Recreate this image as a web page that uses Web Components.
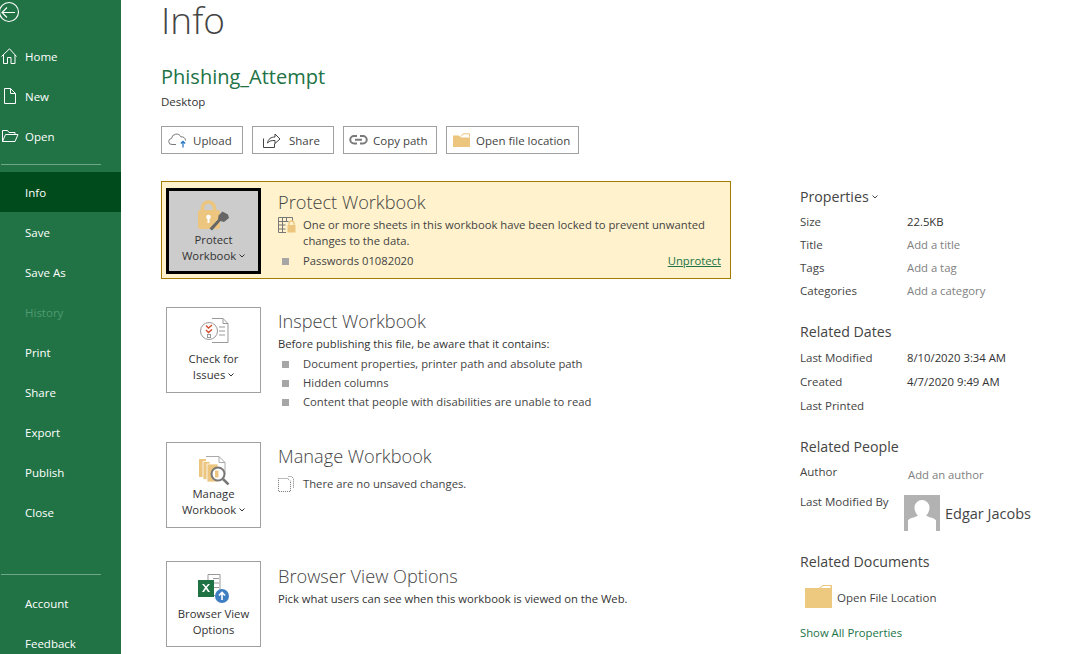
<!DOCTYPE html>
<html>
<head>
<meta charset="utf-8">
<title>Info</title>
<style>
    html, body { margin: 0; height: 654px; overflow: hidden; background: #fff; }
    body { font-family: "Open Sans", "Liberation Sans", sans-serif; font-size: 11.5px; color: #444; }
    svg { display: block; }
</style>
</head>
<body>
<info-page>
    <side-nav slot="nav">
        <svg slot="back" width="20" height="22" viewBox="0 0 20 22" fill="none" stroke="#fff" stroke-width="1.1"><circle cx="9" cy="11" r="9.5"/><path d="M2 11.500h13M7 6.500l-5 5 5 5"/></svg>
        <nav-item><svg slot="icon" width="16" height="16" viewBox="0 0 16 16" fill="none" stroke="#fff"><path d="M.5 8.500 8.500.8l7 7.700M2.500 7v8.500h4v-6h3.500v6h4V7"/></svg>Home</nav-item>
        <nav-item><svg slot="icon" width="16" height="18" viewBox="0 0 16 18" fill="none" stroke="#fff"><path d="M3.500 1.500h6l5 5v10h-11zM9.500 1.500v5h5"/></svg>New</nav-item>
        <nav-item><svg slot="icon" width="18" height="14" viewBox="0 0 18 14" fill="none" stroke="#fff"><path d="M1.500 12.500v-11h5l1.500 2h6v2M1.500 12.500l3-7h12.500l-3 7z"/></svg>Open</nav-item>
        <nav-rule style="margin: 8px 0 7px 1px"></nav-rule>
        <nav-item active>Info</nav-item>
        <nav-item>Save</nav-item>
        <nav-item>Save As</nav-item>
        <nav-item disabled>History</nav-item>
        <nav-item>Print</nav-item>
        <nav-item>Share</nav-item>
        <nav-item>Export</nav-item>
        <nav-item>Publish</nav-item>
        <nav-item>Close</nav-item>
        <nav-rule style="margin: 42px 0 8px 1px"></nav-rule>
        <nav-item>Account</nav-item>
        <nav-item>Feedback</nav-item>
    </side-nav>

    <file-head slot="head" name="Phishing_Attempt" where="Desktop">
        <cmd-button width="82" lead="31">
            <svg slot="icon" width="20" height="16" viewBox="0 0 20 16" fill="none" stroke="#7a7a7a"><path d="M8 12.500H4a3 3 0 0 1-.5-6 5 5 0 0 1 9.500-1.500 3.500 3.500 0 0 1 4.500 3.500"/><path d="M15 15.500V9.500M12.800 11.500l2.200-2.200 2.200 2.200" stroke="#2b79c2" stroke-width="1.300"/></svg>
            Upload
        </cmd-button>
        <cmd-button width="82" lead="36">
            <svg slot="icon" width="20" height="18" viewBox="0 0 20 18" fill="none" stroke="#444"><path d="M2.500 7.500v9h11v-4"/><path d="M6.500 12c.5-4 3.500-6 7.500-6V3l5 5-5 4.500V9.500c-3 0-5.500 0-7.500 2.500z" fill="#fff"/></svg>
            Share
        </cmd-button>
        <cmd-button width="94" lead="29">
            <svg slot="icon" width="19" height="12" viewBox="0 0 19 12" fill="none" stroke="#7a7a7a" stroke-width="2"><path d="M8 2H5a3.500 3.500 0 0 0 0 7.500h3M11 2h3a3.500 3.500 0 0 1 0 7.500h-3M6 5.800h7"/></svg>
            Copy path
        </cmd-button>
        <cmd-button width="133" lead="29">
            <svg slot="icon" width="18" height="14" viewBox="0 0 18 14"><path d="M0 2.500h6l2 2h9v9.500H0z" fill="#ecc57f"/><path d="M8 3.500 10 .8h6.500v3" fill="none" stroke="#ecc57f"/></svg>
            Open file location
        </cmd-button>
    </file-head>

    <info-section slot="sections" heading="Protect Workbook" alert style="margin-top: 27px">
        <big-tile slot="tile" pressed drop>
            <svg slot="icon" width="34" height="31" viewBox="0 0 34 31">
                <path d="M5.500 11V8a6 6 0 0 1 12 0v3" fill="none" stroke="#ecc57f" stroke-width="3.500"/>
                <rect x="1" y="10" width="22" height="19" rx="2" fill="#ecc57f"/>
                <circle cx="11.500" cy="17" r="2.300" fill="#fff"/><rect x="10.500" y="17" width="2" height="6" fill="#fff"/>
                <path d="M25.500 11.500 31 14.500l1 3.500-5 4-3.500-1-8.500 9.500-2.500-2 8.500-9 .5-4z" fill="#666"/>
            </svg>
            Protect<br>Workbook
        </big-tile>
        <line-row style="margin-top: 2px">
            <svg slot="icon" width="18" height="16" viewBox="0 0 18 16" fill="none" stroke="#777"><path d="M.5.500h14v4M.5.500v15h7.500M.5 4.500h10M.5 8h7M.5 12h7M4.500.500v15M8.500.500v4"/><path d="M11 8V6.500a2.500 2.500 0 0 1 5 0V8" stroke="#ecc57f" stroke-width="1.300"/><rect x="9.500" y="8" width="8" height="7.500" fill="#ecc57f" stroke="none"/></svg>
            One or more sheets in this workbook have been locked to prevent unwanted changes to the data.
        </line-row>
        <line-row bullet style="margin-top: 4px">
            <span>Passwords 01082020</span>
            <text-link slot="end" underline>Unprotect</text-link>
        </line-row>
    </info-section>

    <info-section slot="sections" heading="Inspect Workbook" style="margin-top: 21px">
        <big-tile slot="tile" drop>
            <svg slot="icon" width="30" height="25" viewBox="0 0 30 25" fill="none" style="margin-bottom: 7px">
                <path d="M13 .5h11l5 5v19H13" stroke="#999" fill="#fff"/><path d="M24 .5v5h5M20 9h6M20 13h6M20 17h6" stroke="#999"/>
                <circle cx="10" cy="13" r="8.500" stroke="#999" fill="#fff"/>
                <path d="M7 7.500l2.500 2.500 3.500-3M7 12l2.500 2.500 3.500-3" stroke="#d2492a" stroke-width="1.300"/><rect x="8.500" y="16.500" width="3" height="3" stroke="#999"/>
            </svg>
            Check for<br>Issues
        </big-tile>
        <plain-line>Before publishing this file, be aware that it contains:</plain-line>
        <line-row bullet style="margin-top: 4px">Document properties, printer path and absolute path</line-row>
        <line-row bullet style="margin-top: 3px">Hidden columns</line-row>
        <line-row bullet style="margin-top: 3px">Content that people with disabilities are unable to read</line-row>
    </info-section>

    <info-section slot="sections" heading="Manage Workbook" style="margin-top: 35px">
        <big-tile slot="tile" drop>
            <svg slot="icon" width="32" height="30" viewBox="0 0 32 30" fill="none">
                <path d="M8 1.500h13l6 6v12" stroke="#aaa" fill="#fff"/><path d="M21 1.500v6h6" stroke="#aaa"/>
                <path d="M1 4h7v18H1z" fill="#ecc57f"/><path d="M5 6.500h7v18H5z" fill="#ecc57f" stroke="#fff" stroke-width=".8"/><path d="M9 9h11v18H9z" fill="#ecc57f" stroke="#fff" stroke-width=".8"/>
                <circle cx="20" cy="19" r="6.500" fill="#fff" stroke="#777" stroke-width="2"/><path d="M17 15.500h3.500v7H17z" fill="#ecc57f"/>
                <path d="M25 24l5.500 5.500" stroke="#777" stroke-width="2.500"/>
            </svg>
            Manage<br>Workbook
        </big-tile>
        <line-row style="margin-top: 8px">
            <svg slot="icon" width="16" height="16" viewBox="0 0 16 16" fill="none" stroke="#777" stroke-dasharray="1 1"><path d="M.5 2.500h9l3 2.500v10.500h-12zM10.500.5h3l2 2v10"/></svg>
            There are no unsaved changes.
        </line-row>
    </info-section>

    <info-section slot="sections" heading="Browser View Options" style="margin-top: 19px; --head-pad: 3px">
        <big-tile slot="tile" style="--icon-h: 44px">
            <svg slot="icon" width="32" height="30" viewBox="0 0 32 30" fill="none" style="margin-bottom: 1px">
                <path d="M10 .5h12v21H10zM15 4.500h6M15 9h6M15 13.500h6" stroke="#999"/>
                <rect x="0" y="6" width="16" height="17" fill="#1f7244"/>
                <path d="M4 10l3 3.500L4 18h2l2-3 2 3h2l-3-4.500 3-3.500h-2l-2 2.500L6 10z" fill="#fff"/>
                <circle cx="24" cy="22" r="7" fill="#3e7fc1"/><path d="M24 26v-7M21 21.500l3-3 3 3" stroke="#fff" stroke-width="1.600"/>
            </svg>
            Browser View<br>Options
        </big-tile>
        <plain-line>Pick what users can see when this workbook is viewed on the Web.</plain-line>
    </info-section>

    <prop-group slot="props" heading="Properties" drop style="margin-top: 187px">
        <prop-row label="Size">22.5KB</prop-row>
        <prop-row label="Title" muted>Add a title</prop-row>
        <prop-row label="Tags" muted>Add a tag</prop-row>
        <prop-row label="Categories" muted>Add a category</prop-row>
    </prop-group>
    <prop-group slot="props" heading="Related Dates" style="margin-top: 16px; --head-gap: 8px">
        <prop-row label="Last Modified" step="24">8/10/2020 3:34 AM</prop-row>
        <prop-row label="Created" step="24">4/7/2020 9:49 AM</prop-row>
        <prop-row label="Last Printed" step="24"></prop-row>
    </prop-group>
    <prop-group slot="props" heading="Related People" style="margin-top: 15px">
        <prop-row label="Author" muted shift="3" nudge="1">Add an author</prop-row>
        <person-row label="Last Modified By">Edgar Jacobs</person-row>
    </prop-group>
    <prop-group slot="props" heading="Related Documents" style="margin-top: 21px">
        <doc-link>Open File Location</doc-link>
        <text-link style="display: block; margin-top: 17px">Show All Properties</text-link>
    </prop-group>
</info-page>

<script>
    function makeElement(tag, html) {
        customElements.define(tag, class extends HTMLElement {
            constructor() {
                super();
                const shadow = this.attachShadow({mode: 'open'});
                shadow.innerHTML = typeof html === 'function' ? html(this) : html;
            }
        });
    }

    const chevron = '<svg class="chev" width="6" height="4" viewBox="0 0 6 4" fill="none" stroke="currentColor"><path d="M.5.500 3 3 5.500.500"/></svg>';

    makeElement('info-page', `
        <style>
            :host { display: flex; height: 654px; overflow: hidden; }
            .nav { flex: 0 0 121px; }
            .main { flex: 0 0 570px; margin-left: 40px; }
            .props { flex: 0 0 auto; margin-left: 69px; width: 279px; }
        </style>
        <div class="nav"><slot name="nav"></slot></div>
        <div class="main"><slot name="head"></slot><slot name="sections"></slot></div>
        <div class="props"><slot name="props"></slot></div>
    `);

    makeElement('side-nav', `
        <style>
            :host { display: block; height: 654px; background: #217346; color: #fff; overflow: hidden; }
            .back { height: 36px; padding-top: 1px; box-sizing: border-box; }
        </style>
        <div class="back"><slot name="back"></slot></div>
        <slot></slot>
    `);

    makeElement('nav-item', `
        <style>
            :host { display: flex; align-items: center; height: 40px; font-size: 11.5px; }
            :host([active]) { background: #004b1c; }
            :host([disabled]) { color: #4f9a6e; }
            .icon { flex: 0 0 25px; display: flex; padding-left: 1px; box-sizing: border-box; }
        </style>
        <div class="icon"><slot name="icon"></slot></div>
        <slot></slot>
    `);

    makeElement('nav-rule', `
        <style>:host { display: block; height: 1px; width: 100px; background: #6fa888; }</style>
    `);

    makeElement('file-head', el => `
        <style>
            :host { display: block; }
            h1 { font: 300 37px/40px "Open Sans", sans-serif; color: #444; margin: 0; }
            h2 { font: 400 20px/27px "Open Sans", sans-serif; color: #217346; margin: 23px 0 0; }
            .where { font-size: 11.5px; line-height: 16px; margin-top: 4px; color: #333; }
            .bar { display: flex; gap: 9px; margin-top: 16px; }
        </style>
        <h1>Info</h1>
        <h2>${el.getAttribute('name')}</h2>
        <div class="where">${el.getAttribute('where')}</div>
        <div class="bar"><slot></slot></div>
    `);

    makeElement('cmd-button', el => `
        <style>
            :host { display: flex; align-items: center; flex: 0 0 ${el.getAttribute('width')}px; height: 28px; box-sizing: border-box; border: 1px solid #a0a0a0; background: #fff; color: #444; font-size: 11.5px; white-space: nowrap; }
            .icon { flex: 0 0 ${el.getAttribute('lead')}px; display: flex; justify-content: center; }
        </style>
        <div class="icon"><slot name="icon"></slot></div><slot></slot>
    `);

    makeElement('info-section', el => `
        <style>
            :host { display: flex; gap: 17px; padding: 6px 4px 4px; border: 1px solid transparent; box-sizing: border-box; height: 100px; }
            :host([alert]) { background: #fff2cc; border-color: #a67c00; height: 98px; }
            .body { flex: 1; min-width: 0; padding-top: var(--head-pad, 2px); }
            h3 { font: 300 18.2px/24px "Open Sans", sans-serif; color: #444; margin: 0 0 3px; }
        </style>
        <slot name="tile"></slot>
        <div class="body">
            <h3>${el.getAttribute('heading')}</h3>
            <slot></slot>
        </div>
    `);

    makeElement('big-tile', el => `
        <style>
            :host { flex: 0 0 95px; display: flex; flex-direction: column; align-items: center; box-sizing: border-box; height: 86px; border: 1px solid #a0a0a0; background: #fff; color: #333; text-align: center; font-size: 11.3px; line-height: 16px; }
            :host([pressed]) { border: 3px solid #000; background: #ccc; }
            .icon { height: var(--icon-h, 43px); display: flex; align-items: flex-end; padding-bottom: 1px; box-sizing: border-box; }
            :host([pressed]) .icon { height: 41px; }
            .chev { display: inline-block; margin: 0 0 2px 0; }
        </style>
        <div class="icon"><slot name="icon"></slot></div>
        <div><slot></slot>${el.hasAttribute('drop') ? chevron : ''}</div>
    `);

    makeElement('line-row', el => `
        <style>
            :host { display: flex; font-size: 11.25px; line-height: 16px; color: #444; }
            .lead { flex: 0 0 25px; display: flex; }
            .dot { width: 7px; height: 7px; margin: 5px 0 0 4px; background: #a6a6a6; }
            .text { flex: 1; }
            .end { margin-right: 5px; }
        </style>
        <div class="lead">${el.hasAttribute('bullet') ? '<div class="dot"></div>' : '<slot name="icon"></slot>'}</div>
        <div class="text"><slot></slot></div>
        <div class="end"><slot name="end"></slot></div>
    `);

    makeElement('plain-line', `
        <style>:host { display: block; font-size: 11.25px; line-height: 16px; color: #333; }</style>
        <slot></slot>
    `);

    makeElement('text-link', `
        <style>
            :host { color: #217346; font-size: 11.3px; line-height: 16px; }
            :host([underline]) { text-decoration: underline; }
        </style>
        <slot></slot>
    `);

    makeElement('prop-group', el => `
        <style>
            :host { display: block; }
            h4 { font: 400 14.2px/20px "Open Sans", sans-serif; color: #444; margin: 0 0 var(--head-gap, 7px); display: flex; align-items: center; gap: 3px; }
        </style>
        <h4>${el.getAttribute('heading')}${el.hasAttribute('drop') ? chevron : ''}</h4>
        <slot></slot>
    `);

    makeElement('prop-row', el => `
        <style>
            :host { display: flex; height: ${el.getAttribute('step') || 23}px; align-items: flex-start; font-size: 11.5px; line-height: 16px; color: #444; }
            .label { flex: 0 0 ${107 + Number(el.getAttribute('nudge') || 0)}px; }
            .value { font-size: 11.3px; color: #333; margin-top: ${el.getAttribute('shift') || 0}px; }
            :host([muted]) .value { color: #808080; }
        </style>
        <div class="label">${el.getAttribute('label')}</div>
        <div class="value"><slot></slot></div>
    `);

    makeElement('person-row', el => `
        <style>
            :host { display: flex; align-items: flex-start; font-size: 11.5px; line-height: 16px; margin-top: 7px; }
            .label { flex: 0 0 104px; }
            .name { margin: 11px 0 0 5px; font-size: 14.5px; line-height: 18px; color: #444; }
            svg { display: block; margin-top: 1px; }
        </style>
        <div class="label">${el.getAttribute('label')}</div>
        <svg width="36" height="36" viewBox="0 0 36 36">
            <rect width="36" height="36" fill="#b2b2b2"/>
            <path d="M18 5a7.500 7.500 0 0 1 7.500 7.500c0 4-2 7-3.500 8 4 2.500 8 2 10 5V36H4V25.500c2-3 6-2.500 10-5-1.500-1-3.500-4-3.500-8A7.500 7.500 0 0 1 18 5z" fill="#fff"/>
        </svg>
        <div class="name"><slot></slot></div>
    `);

    makeElement('doc-link', `
        <style>
            :host { display: flex; align-items: center; gap: 5px; margin: 12px 0 0 5px; font-size: 11.5px; color: #444; }
            svg { display: block; }
            .label { padding-top: 2px; }
        </style>
        <svg width="27" height="24" viewBox="0 0 27 24">
            <path d="M0 4h14l4-3h9v23H0z" fill="#ecc97f"/>
            <path d="M15 4l3-2.500h8V4" fill="#fff" stroke="#ecc97f"/>
        </svg>
        <div class="label"><slot></slot></div>
    `);
</script>
</body>
</html>
